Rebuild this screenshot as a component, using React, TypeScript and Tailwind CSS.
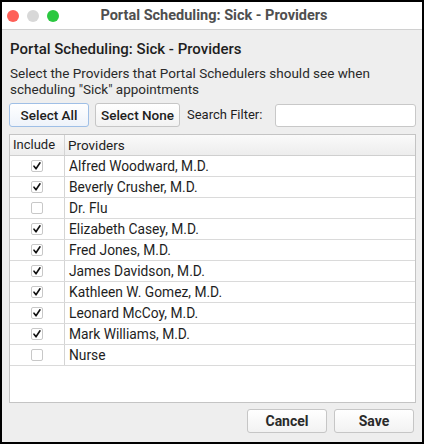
import React from "react";

const providers: [string, boolean][] = [
  ["Alfred Woodward, M.D.", true],
  ["Beverly Crusher, M.D.", true],
  ["Dr. Flu", false],
  ["Elizabeth Casey, M.D.", true],
  ["Fred Jones, M.D.", true],
  ["James Davidson, M.D.", true],
  ["Kathleen W. Gomez, M.D.", true],
  ["Leonard McCoy, M.D.", true],
  ["Mark Williams, M.D.", true],
  ["Nurse", false],
];

function Check({ on }: { on: boolean }) {
  return (
    <div className="w-[12px] h-[12px] border border-[#c8c8c8] bg-white rounded-[2px] flex items-center justify-center">
      {on && (
        <svg width="10" height="10" viewBox="0 0 10 10">
          <path d="M2 5.2 L4 7.8 L8 1.8" fill="none" stroke="#111" strokeWidth="1.6" strokeLinecap="round" strokeLinejoin="round" />
        </svg>
      )}
    </div>
  );
}

export default function App() {
  return (
    <div
      className="w-[424px] h-[444px] border-[2px] border-black bg-[#eeeeee] flex flex-col text-[#1e1e1e]"
      style={{ fontFamily: "Roboto, 'Liberation Sans', sans-serif" }}
    >
      <div className="h-[28px] bg-white border-b border-[#d0d0d0] flex items-center relative shrink-0">
        <div className="flex gap-[8px] pl-[5px]">
          <div className="w-[12px] h-[12px] rounded-full bg-[#fe5f57]" />
          <div className="w-[12px] h-[12px] rounded-full bg-[#d8d8d8]" />
          <div className="w-[12px] h-[12px] rounded-full bg-[#2bc840]" />
        </div>
        <div className="absolute inset-0 flex items-center justify-center text-[14.5px] font-bold text-[#4f4f4f] pl-[4px]">
          Portal Scheduling: Sick - Providers
        </div>
      </div>
      <div className="flex-1 flex flex-col px-[7px] pt-[10px]">
        <div className="text-[15px] font-medium leading-[18px] pl-[1px]">Portal Scheduling: Sick - Providers</div>
        <div className="text-[13.5px] leading-[16px] mt-[7px] pl-[1px] text-[#2a2a2a]">
          Select the Providers that Portal Schedulers should see when scheduling "Sick" appointments
        </div>
        <div className="flex items-center mt-[6px] h-[24px]">
          <button className="shrink-0 w-[80px] h-[24px] border border-[#9fbfe6] rounded-[3px] bg-gradient-to-b from-white to-[#eef3fa] text-[13.5px] font-medium whitespace-nowrap">
            Select All
          </button>
          <button className="shrink-0 w-[85px] h-[24px] ml-[6px] border border-[#c6c6c6] rounded-[3px] bg-gradient-to-b from-white to-[#f2f2f2] text-[13.5px] font-medium whitespace-nowrap">
            Select None
          </button>
          <span className="shrink-0 ml-[7px] text-[13px] whitespace-nowrap">Search Filter:</span>
          <div className="shrink-0 ml-[13px] w-[141px] h-[23px] bg-white border border-[#c8c8c8] rounded-[3px]" />
        </div>
        <div className="mt-[7px] w-[407px] h-[269px] bg-white border border-[#c4c4c4] flex flex-col">
          <div className="h-[21px] flex bg-gradient-to-b from-[#fafafa] to-[#ededed] border-b border-[#cfcfcf] text-[13px] items-stretch">
            <div className="w-[55px] pl-[3px] border-r border-[#d4d4d4] flex items-center">Include</div>
            <div className="pl-[3px] flex items-center text-[13.5px]">Providers</div>
          </div>
          {providers.map(([name, on]) => (
            <div key={name} className="h-[21px] flex border-b border-[#dadada] text-[13.8px] items-stretch">
              <div className="w-[55px] border-r border-[#d4d4d4] flex items-center justify-center">
                <Check on={on} />
              </div>
              <div className="pl-[4px] flex items-center">{name}</div>
            </div>
          ))}
        </div>
        <div className="flex justify-end gap-[7px] mt-[6px] pr-[1px]">
          <button className="w-[80px] h-[24px] border border-[#c6c6c6] rounded-[3px] bg-gradient-to-b from-white to-[#f2f2f2] text-[14px] font-bold text-[#2a2a2a]">
            Cancel
          </button>
          <button className="w-[80px] h-[24px] border border-[#c6c6c6] rounded-[3px] bg-gradient-to-b from-white to-[#f2f2f2] text-[14px] font-bold text-[#2a2a2a]">
            Save
          </button>
        </div>
      </div>
    </div>
  );
}
